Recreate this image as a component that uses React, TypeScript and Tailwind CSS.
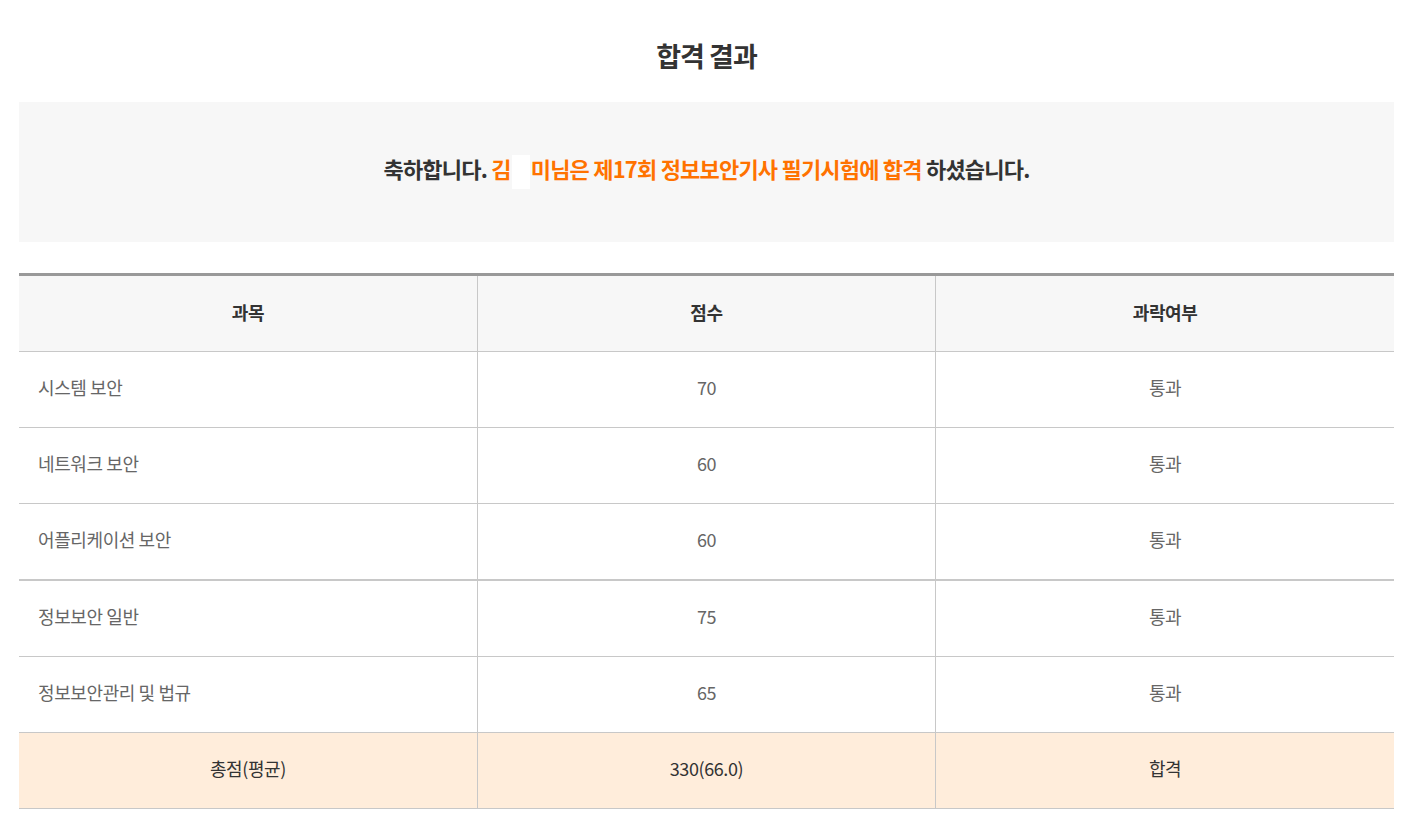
const rows = [
  { subject: '시스템 보안', score: '70', result: '통과' },
  { subject: '네트워크 보안', score: '60', result: '통과' },
  { subject: '어플리케이션 보안', score: '60', result: '통과' },
  { subject: '정보보안 일반', score: '75', result: '통과' },
  { subject: '정보보안관리 및 법규', score: '65', result: '통과' },
];

export default function App() {
  return (
    <div
      className="min-h-screen bg-white pl-[19px] pr-[24px] text-[#333]"
      style={{ fontFamily: '"Noto Sans CJK KR", "Noto Sans", sans-serif' }}
    >
      <h2 className="pt-[36px] pb-[26px] text-center text-[27px] font-bold leading-[40px] tracking-[-1px] text-[#333]">
        합격 결과
      </h2>

      <div className="flex h-[140px] items-center justify-center bg-[#f7f7f7] pb-[8px]">
        <p className="text-[22px] font-bold leading-[34px] tracking-[-0.8px] text-[#333]">
          축하합니다.{' '}
          <span className="text-[#ff7200]">
            김
            <span className="relative mx-[1px] inline-block w-[18px] align-middle">
              <span className="absolute left-0 top-[-17px] h-[34px] w-[18px] bg-white" />
            </span>
            미님은 제17회 정보보안기사 필기시험에 합격
          </span>{' '}
          하셨습니다.
        </p>
      </div>

      <table className="mt-[31px] w-full table-fixed border-collapse border-t-[3px] border-[#999] text-[18px] tracking-[-0.4px]">
        <thead>
          <tr className="h-[77px] bg-[#f7f7f7] border-b border-[#c8c8c8]">
            <th className="border-r border-[#c8c8c8] pb-[2px] font-bold text-[#333]">과목</th>
            <th className="border-r border-[#c8c8c8] pb-[2px] font-bold text-[#333]">점수</th>
            <th className="pb-[2px] font-bold text-[#333]">과락여부</th>
          </tr>
        </thead>
        <tbody>
          {rows.map((r, i) => (
            <tr
              key={r.subject}
              className={
                i === 3
                  ? 'h-[77px] border-t-2 border-b border-[#c8c8c8]'
                  : 'h-[76px] border-b border-[#c8c8c8]'
              }
            >
              <td className="border-r border-[#c8c8c8] pb-[4px] pl-[19px] text-left text-[#666]">{r.subject}</td>
              <td className="border-r border-[#c8c8c8] pb-[4px] text-center text-[#666]">{r.score}</td>
              <td className="pb-[4px] text-center text-[#666]">{r.result}</td>
            </tr>
          ))}
          <tr className="h-[76px] bg-[#ffeddb] border-b border-[#c8c8c8]">
            <td className="border-r border-[#c8c8c8] pb-[4px] text-center text-[#333]">총점(평균)</td>
            <td className="border-r border-[#c8c8c8] pb-[4px] text-center text-[#333]">330(66.0)</td>
            <td className="pb-[4px] text-center text-[#333]">합격</td>
          </tr>
        </tbody>
      </table>
    </div>
  );
}
